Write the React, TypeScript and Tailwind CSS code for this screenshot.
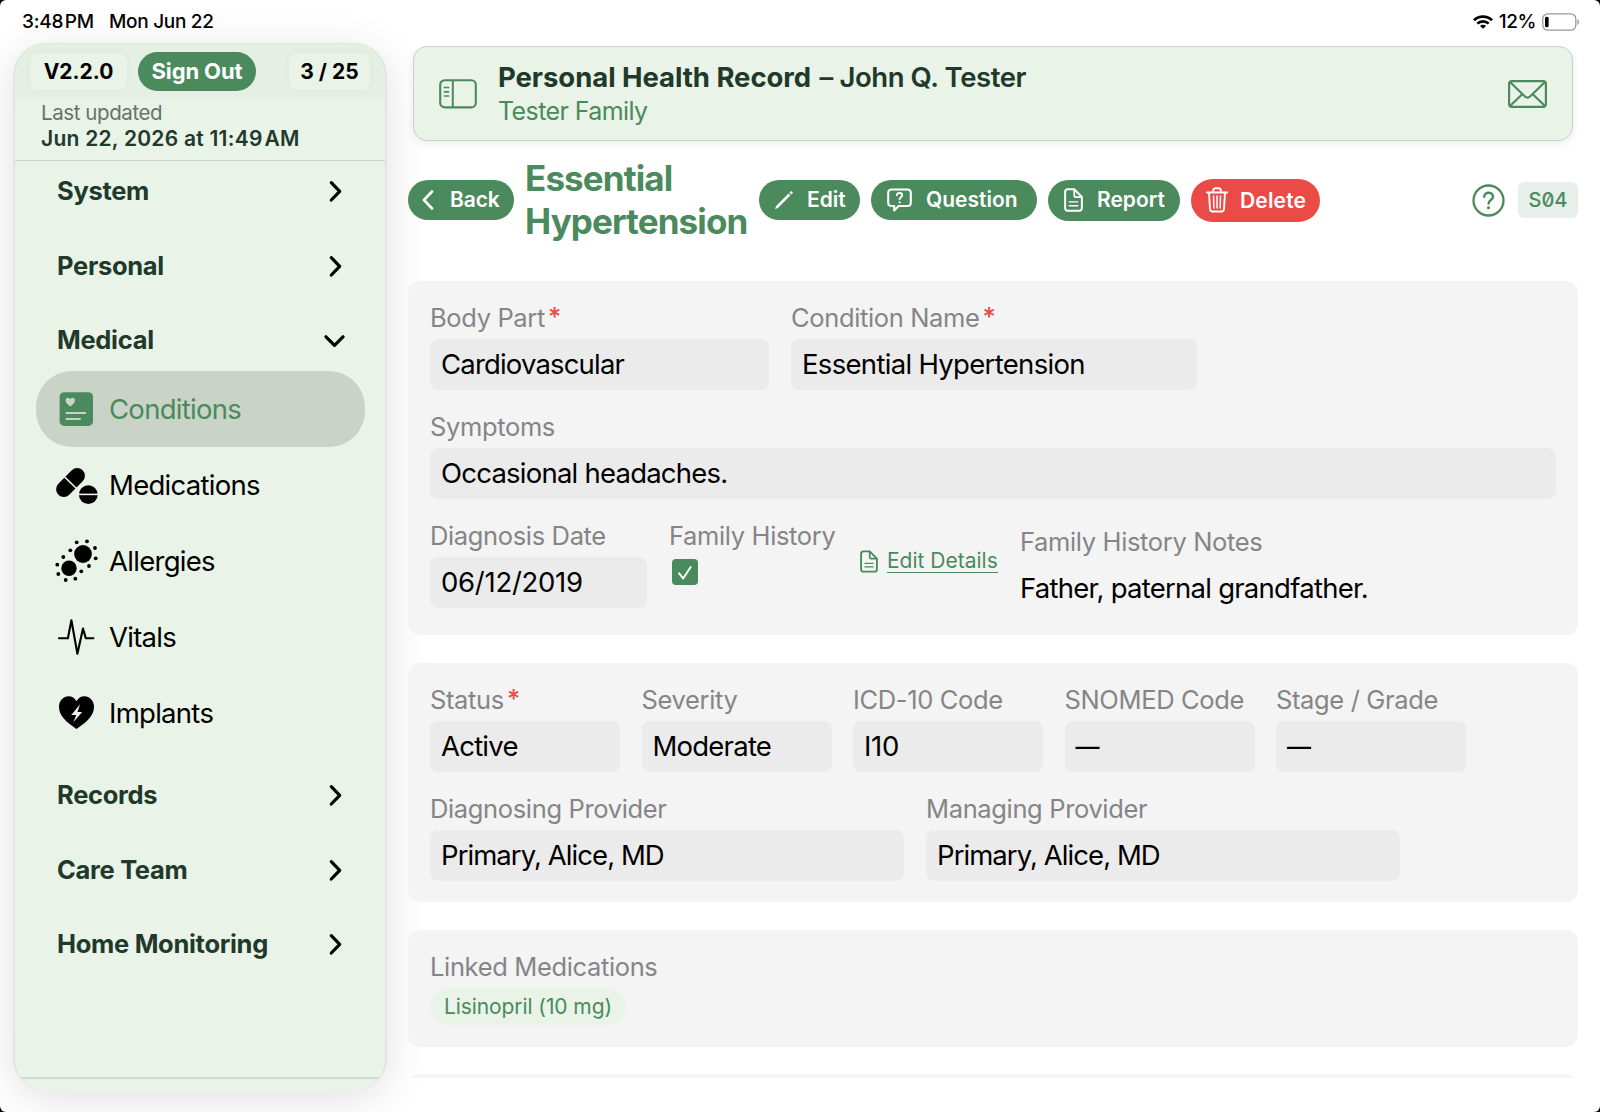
import type { ReactNode } from "react";
import { clsx } from "clsx";

const green = "#4a8a5c";

function ConditionsIcon() {
  return (
    <svg className="w-11 h-11" viewBox="0 0 44 44" fill="none">
      <rect x="5.6" y="5.3" width="33.4" height="33.6" rx="4.5" fill={green} />
      <path d="M16.3 19.4c-2.7-1.900-4.700-3.700-4.700-5.900 0-3.100 3.500-3.700 4.700-1.200 1.200-2.500 4.700-1.900 4.700 1.200 0 2.200-2 4-4.700 5.900z" fill="#cad3c8" />
      <path d="M12.5 26h18.600M12.500 32h13.500" stroke="#cad3c8" strokeWidth="2" strokeLinecap="round" />
    </svg>
  );
}

function MedicationsIcon() {
  return (
    <svg className="w-11 h-11" viewBox="0 0 44 44" fill="none">
      <path d="M9.8 26.2L23.2 12.8" stroke="#000" strokeWidth="15.4" strokeLinecap="round" />
      <path d="M10 13.400L23 26" stroke="#e9f3e8" strokeWidth="1.5" />
      <circle cx="34.3" cy="31.7" r="9.4" fill="#000" />
      <path d="M24 31.400h20" stroke="#e9f3e8" strokeWidth="1.6" />
    </svg>
  );
}

const dots = [
  [22.7, 3.3], [33, 2.3], [41, 9], [41.7, 19.3], [35, 27], [27.3, 32.3],
  [21.3, 39.7], [11.7, 41], [4.3, 35], [3.3, 25.7], [9.3, 18], [16.3, 11.3],
];

function AllergiesIcon() {
  return (
    <svg className="w-11 h-11" viewBox="0 0 44 44">
      <circle cx="29" cy="15" r="8.9" />
      <circle cx="15" cy="29.3" r="7.7" />
      {dots.map(([x, y]) => (
        <circle key={`${x}-${y}`} cx={x} cy={y} r="1.9" />
      ))}
    </svg>
  );
}

function VitalsIcon() {
  return (
    <svg className="w-11 h-11" viewBox="0 0 44 44" fill="none" stroke="#000" strokeWidth="2.1" strokeLinecap="round" strokeLinejoin="round">
      <path d="M5 23.300h8.900L17.400 5.300l6 33.500L29 13.600l2.800 9.700h7.500" />
    </svg>
  );
}

function ImplantsIcon() {
  return (
    <svg className="w-11 h-11" viewBox="0 0 44 44">
      <path d="M22.5 38C12 31 5 24.5 5 15.800 5 9.500 9.400 5.300 14.600 5.300c3.500 0 6.300 1.900 7.900 5 1.600-3.100 4.400-5 7.900-5 5.200 0 9.600 4.200 9.600 10.500C40 24.500 33 31 22.500 38z" />
      <path d="M26 13.300L17.300 24h5l-3 7.300 8.900-10.200H23.500z" fill="#e9f3e8" />
    </svg>
  );
}

function DocIcon({ className }: { className?: string }) {
  return (
    <svg className={className} viewBox="0 0 20 25" fill="none" stroke="currentColor" strokeLinecap="round" strokeLinejoin="round">
      <path d="M4 1.200h6.800l8 8.200V21c0 1.900-1 2.800-2.800 2.800H4c-1.900 0-2.800-.9-2.800-2.800V4c0-1.900.9-2.800 2.800-2.800z" strokeWidth="2.1" />
      <path d="M10.800 1.500v6.200c0 1.200.5 1.700 1.700 1.700h6" strokeWidth="1.9" />
      <path d="M5.500 14.500h9M5.500 18.500h9" strokeWidth="1.5" />
    </svg>
  );
}

function Chevron({ open }: { open?: boolean }) {
  return (
    <svg className="w-6 h-6" viewBox="0 0 24 24" fill="none" stroke="#000" strokeWidth="3.2" strokeLinecap="round" strokeLinejoin="round">
      {open ? <path d="M2 8.800L10.500 17.400 19 8.800" /> : <path d="M7.300 3.600L15.700 12.300l-8.400 8.700" />}
    </svg>
  );
}

function Section({ label, open }: { label: string; open?: boolean }) {
  return (
    <div className="h-[74.5px] pl-[43px] pr-[38.5px] flex items-center justify-between">
      <span className="text-[25.5px] font-bold tracking-[-0.012em] text-[#21392b]">{label}</span>
      <Chevron open={open} />
    </div>
  );
}

function NavItem({ icon, label, active }: { icon: ReactNode; label: string; active?: boolean }) {
  return (
    <div className={clsx("h-[76px] mx-[21.5px] pl-[18.5px] flex items-center gap-[11px] rounded-[36px] text-[27.5px] tracking-[-0.026em]", active ? "bg-[#cad3c8] text-[#4a8a5c]" : "text-black")}>
      {icon}
      <span className="pt-[2px]">{label}</span>
    </div>
  );
}

function Sidebar() {
  return (
    <aside className="w-[374px] h-[1048px] shrink-0 rounded-[33px] overflow-hidden bg-[#e9f3e8] border-x-2 border-t border-[#dce7dd] shadow-[0_8px_44px_rgba(0,0,0,0.12)] flex flex-col">
      <div className="h-[55px] shrink-0 px-[15px] flex items-center bg-[#e5efe4] text-[21px] font-bold">
        <span className="w-[97px] h-[37px] rounded-lg bg-[#e9f3e8] flex items-center justify-center shadow-[0_0_8px_rgba(0,0,0,0.04)]">V2.2.0</span>
        <span className="ml-[11px] w-[118px] h-[39px] rounded-full bg-[#4a8a5c] text-white flex items-center justify-center text-[22px] tracking-[-0.005em]">Sign Out</span>
        <span className="ml-auto w-[81px] h-[37px] rounded-lg bg-[#e9f3e8] flex items-center justify-center shadow-[0_0_8px_rgba(0,0,0,0.04)]">3 / 25</span>
      </div>
      <div className="h-[62px] shrink-0 pl-[26px] pt-px border-b border-[#c8d3c9] leading-[25.5px]">
        <div className="text-[20.5px] tracking-[-0.02em] text-[#66736a]">Last updated</div>
        <div className="text-[21px] font-semibold tracking-[0.012em] text-[#21392b]">Jun 22, 2026 at 11:49{"\u200a"}AM</div>
      </div>
      <nav className="h-[925px] shrink-0 -mx-px -mt-[7px] border-b-2 border-[#cfdbd0]">
        <Section label="System" />
        <Section label="Personal" />
        <div className="h-[68px]">
          <Section label="Medical" open />
        </div>
        <NavItem icon={<ConditionsIcon />} label="Conditions" active />
        <NavItem icon={<MedicationsIcon />} label="Medications" />
        <NavItem icon={<AllergiesIcon />} label="Allergies" />
        <NavItem icon={<VitalsIcon />} label="Vitals" />
        <NavItem icon={<ImplantsIcon />} label="Implants" />
        <div className="h-[7px]" />
        <Section label="Records" />
        <Section label="Care Team" />
        <Section label="Home Monitoring" />
      </nav>
    </aside>
  );
}

function StatusBar() {
  return (
    <div className="h-[43px] shrink-0 pl-[22px] pr-[20px] pt-px flex items-center text-[19px] font-medium">
      <span className="tracking-[-0.01em]">3:48{"\u200a"}PM</span>
      <span className="ml-[15px] tracking-[-0.015em]">Mon Jun 22</span>
      <svg className="ml-auto w-5 h-[14px]" viewBox="0 0 20 14" fill="none" stroke="#000" strokeWidth="2.7">
        <path d="M1 5.200c5-4.900 13-4.900 18 0M4.300 8.600c3.200-3.100 8.200-3.100 11.400 0" />
        <path d="M10 13.800L7 10.900c1.700-1.600 4.300-1.600 6 0z" fill="#000" stroke="none" />
      </svg>
      <span className="ml-[6px] tracking-[-0.02em]">12%</span>
      <svg className="ml-[6px] w-[38px] h-[18px]" viewBox="0 0 38 18" fill="none">
        <rect x=".8" y=".8" width="33" height="16.4" rx="5" stroke="#9a9a9a" strokeWidth="1.3" />
        <rect x="3" y="3.8" width="3.6" height="10.4" rx="1.5" fill="#000" />
        <path d="M35.500 6v6c1.800-.8 1.800-5.200 0-6z" fill="#8a8a8a" />
      </svg>
    </div>
  );
}

function HeaderBar() {
  return (
    <header className="ml-[5px] w-[1160px] h-[95px] shrink-0 rounded-[14px] border border-[#c9d0ca] bg-[#e9f3e8] shadow-[0_3px_10px_rgba(0,0,0,0.07)] px-[25px] flex items-center">
      <svg className="w-[38px] h-[30px]" viewBox="0 0 38 30" fill="none" stroke={green}>
        <rect x="1.200" y="1.2" width="35.6" height="27.2" rx="4.5" strokeWidth="2.1" />
        <path d="M13.800 1.500v27" strokeWidth="2" />
        <path d="M5.500 8.500h4M5.500 12.800h4M5.500 17h4" strokeWidth="1.7" strokeLinecap="round" />
      </svg>
      <div className="ml-[21px] pt-px leading-[34px]">
        <div className="text-[27.5px] font-bold tracking-[-0.002em] text-[#21392b] whitespace-nowrap">
          Personal Health Record <span className="ml-[2px] font-semibold tracking-[-0.015em]">– John Q. Tester</span>
        </div>
        <div className="text-[25px] tracking-[-0.024em] text-[#4a8a5c]">Tester Family</div>
      </div>
      <svg className="ml-auto w-[39px] h-[28px]" viewBox="0 0 39 28" fill="none" stroke={green} strokeWidth="2.2" strokeLinejoin="round">
        <rect x="1.1" y="1.1" width="36.8" height="25.8" rx="3" />
        <path d="M2 2l15 14.500c1.700 1.500 3.300 1.500 5 0L37 2M2 26l12.500-12M37 26L24.500 14" />
      </svg>
    </header>
  );
}

function Toolbar() {
  return (
    <div className="mt-[16px] h-[86px] shrink-0 flex items-center text-[21px] font-semibold text-white">
      <div className="w-[106px] h-10 rounded-full bg-[#4a8a5c] flex items-center pl-[14px]">
        <svg className="w-3 h-5" viewBox="0 0 12 20" fill="none" stroke="#fff" strokeWidth="2.6" strokeLinecap="round" strokeLinejoin="round">
          <path d="M10 1.500L2 10l8 8.500" />
        </svg>
        <span className="ml-[16px] tracking-[-0.005em]">Back</span>
      </div>
      <h1 className="ml-[11px] w-[234px] text-[35px] leading-[43.5px] font-bold tracking-[-0.025em] text-[#4a8a5c]">
        Essential Hypertension
      </h1>
      <div className="w-[101px] h-10 rounded-full bg-[#4a8a5c] flex items-center pl-[15px]">
        <svg className="w-5 h-5" viewBox="0 0 20 20" fill="#fff">
          <path d="M14.500 3.600l1.900 1.900L3.900 17.900 1 19l1.200-3z" />
          <path d="M15.400 2.700l1.100-1.100c1.200-1.200 3.100.7 1.900 1.900l-1.100 1.100z" />
        </svg>
        <span className="ml-[13px]">Edit</span>
      </div>
      <div className="ml-[11px] w-[166px] h-10 rounded-full bg-[#4a8a5c] flex items-center pl-[16px]">
        <svg className="w-[25px] h-[24px]" viewBox="0 0 25 24" fill="none" stroke="#fff" strokeLinecap="round" strokeLinejoin="round">
          <path d="M4.800 1.500h15.400c2.400 0 3.600 1.200 3.600 3.600v9.300c0 2.400-1.200 3.600-3.600 3.600h-8.500L7.200 22.500V18H4.800c-2.400 0-3.600-1.200-3.600-3.600V5.100c0-2.400 1.200-3.600 3.600-3.600z" strokeWidth="2.1" />
          <path d="M9.800 7.200c.3-3 5.400-3 5.400.1 0 1.900-2.600 2-2.600 4" strokeWidth="1.9" />
          <circle cx="12.6" cy="14.3" r=".6" fill="#fff" />
        </svg>
        <span className="ml-[14px]">Question</span>
      </div>
      <div className="ml-[11px] w-[132px] h-[41px] rounded-full bg-[#4a8a5c] flex items-center pl-[16px]">
        <DocIcon className="w-[19px] h-[24px]" />
        <span className="ml-[14px]">Report</span>
      </div>
      <div className="ml-[11px] w-[129px] h-[43px] rounded-full bg-[#ea4b47] flex items-center pl-[15px]">
        <svg className="w-[22px] h-[26px]" viewBox="0 0 22 26" fill="none" stroke="#fff" strokeWidth="1.9" strokeLinecap="round" strokeLinejoin="round">
          <path d="M1 5.500h20M3 5.500l1 16.200c.1 2 .8 2.800 2.600 2.800h8.800c1.800 0 2.500-.8 2.600-2.800l1-16.200M7.200 5.300V3.500c0-1.500.7-2.200 2.200-2.200h3.200c1.500 0 2.200.7 2.200 2.200v1.800" />
          <path d="M7.500 9l.4 12M11 9v12M14.500 9l-.4 12" strokeWidth="1.5" />
        </svg>
        <span className="ml-[12px] pt-px tracking-[0.008em]">Delete</span>
      </div>
      <svg className="ml-auto w-[33px] h-[33px]" viewBox="0 0 33 33" fill="none" stroke={green} strokeLinecap="round">
        <circle cx="16.5" cy="16.5" r="15" strokeWidth="2.3" />
        <path d="M12.200 12.700c.2-5.300 8.800-5.300 8.800.1 0 3.300-4.400 3.200-4.400 6.700" strokeWidth="2.4" />
        <circle cx="16.5" cy="23.7" r=".9" fill={green} strokeWidth="1.2" />
      </svg>
      <div className="ml-[13px] w-[60px] h-[36px] rounded-md bg-[#e6efe9] text-[#4a8a5c] text-[20px] font-medium slashed-zero flex items-center justify-center">S04</div>
    </div>
  );
}

function Label({ children, required }: { children: ReactNode; required?: boolean }) {
  return (
    <div className="h-9 leading-[29px] text-[25.5px] tracking-[-0.014em] text-[#858587] whitespace-nowrap">
      {children}
      {required && <span className="relative -top-px ml-[3px] font-medium text-[#ea4b47]">*</span>}
    </div>
  );
}

type FieldProps = {
  label: string;
  value: string;
  width: string;
  required?: boolean;
  valueClass?: string;
};

function Field({ label, value, width, required, valueClass = "text-[27.5px] tracking-[-0.028em]" }: FieldProps) {
  return (
    <div className={width}>
      <Label required={required}>{label}</Label>
      <div className={clsx("h-[51px] rounded-lg bg-[#ebebeb] pl-[11px] pt-px flex items-center whitespace-nowrap", valueClass)}>{value}</div>
    </div>
  );
}

export default function App() {
  return (
    <div className="w-[1600px] h-[1112px] bg-black overflow-hidden text-black font-[Inter,'Liberation_Sans',sans-serif]">
      <div className="w-full h-full bg-white rounded-[6px] overflow-hidden flex flex-col">
        <StatusBar />
        <div className="flex pl-[13px]">
          <Sidebar />
          <main className="ml-[21px] mt-[3px] w-[1170px] h-[1032px] overflow-hidden flex flex-col">
            <HeaderBar />
            <Toolbar />

            <section className="mt-[38px] h-[354px] shrink-0 rounded-xl bg-[#f4f4f4] p-[22px] flex flex-col gap-[22px]">
              <div className="flex gap-[22px]">
                <Field label="Body Part" value="Cardiovascular" width="w-[339px]" valueClass="text-[27.5px] tracking-[-0.03em]" required />
                <Field label="Condition Name" value="Essential Hypertension" width="w-[406px]" valueClass="text-[27.5px] tracking-[-0.025em]" required />
              </div>
              <Field label="Symptoms" value="Occasional headaches." width="w-full" />
              <div className="flex">
                <Field label="Diagnosis Date" value="06/12/2019" width="w-[217px]" valueClass="text-[27.5px] tracking-[-0.01em]" />
                <div className="ml-[22px] w-[166px]">
                  <Label>Family History</Label>
                  <div className="mt-[2px] ml-[3px] w-[26px] h-[26px] rounded-[4px] bg-[#4a8a5c]">
                    <svg className="w-[26px] h-[26px]" viewBox="0 0 26 26" fill="none" stroke="#fff" strokeWidth="2" strokeLinecap="round" strokeLinejoin="round">
                      <path d="M7 14.200l4.100 5.300L18.700 8" />
                    </svg>
                  </div>
                </div>
                <div className="ml-[25px] w-[139px] h-[26px] mt-[27px] flex items-center text-[#4a8a5c] whitespace-nowrap">
                  <DocIcon className="w-[18px] h-[23px]" />
                  <span className="ml-[9px] text-[21px] leading-[23px] border-b-[1.5px] border-[#4a8a5c]">Edit Details</span>
                </div>
                <div className="ml-[21px] mt-[6px]">
                  <Label>Family History Notes</Label>
                  <div className="pt-[8px] text-[27.5px] leading-[34px] tracking-[-0.027em]">Father, paternal grandfather.</div>
                </div>
              </div>
            </section>

            <section className="mt-[28px] h-[239px] shrink-0 rounded-xl bg-[#f4f4f4] p-[22px] flex flex-col gap-[22px]">
              <div className="flex gap-[21.5px]">
                <Field label="Status" value="Active" width="w-[190px]" required />
                <Field label="Severity" value="Moderate" width="w-[190px]" />
                <Field label="ICD-10 Code" value="I10" width="w-[190px]" valueClass="text-[27.5px] tracking-[-0.01em]" />
                <Field label="SNOMED Code" value="—" width="w-[190px]" valueClass="text-[24px] font-medium" />
                <Field label="Stage / Grade" value="—" width="w-[190px]" valueClass="text-[24px] font-medium" />
              </div>
              <div className="flex gap-[22px]">
                <Field label="Diagnosing Provider" value="Primary, Alice, MD" width="w-[474px]" valueClass="text-[27.5px] tracking-[-0.034em]" />
                <Field label="Managing Provider" value="Primary, Alice, MD" width="w-[474px]" valueClass="text-[27.5px] tracking-[-0.034em]" />
              </div>
            </section>

            <section className="mt-[28px] h-[117px] shrink-0 rounded-xl bg-[#f4f4f4] p-[22px]">
              <Label>Linked Medications</Label>
              <span className="w-[196px] h-[37px] rounded-full bg-[#e9f3e8] text-[#4a8a5c] text-[21px] tracking-[-0.004em] flex items-center justify-center">Lisinopril (10 mg)</span>
            </section>

            <section className="mt-[27px] h-[60px] shrink-0 rounded-xl bg-[#f4f4f4]" />
          </main>
        </div>
      </div>
    </div>
  );
}
